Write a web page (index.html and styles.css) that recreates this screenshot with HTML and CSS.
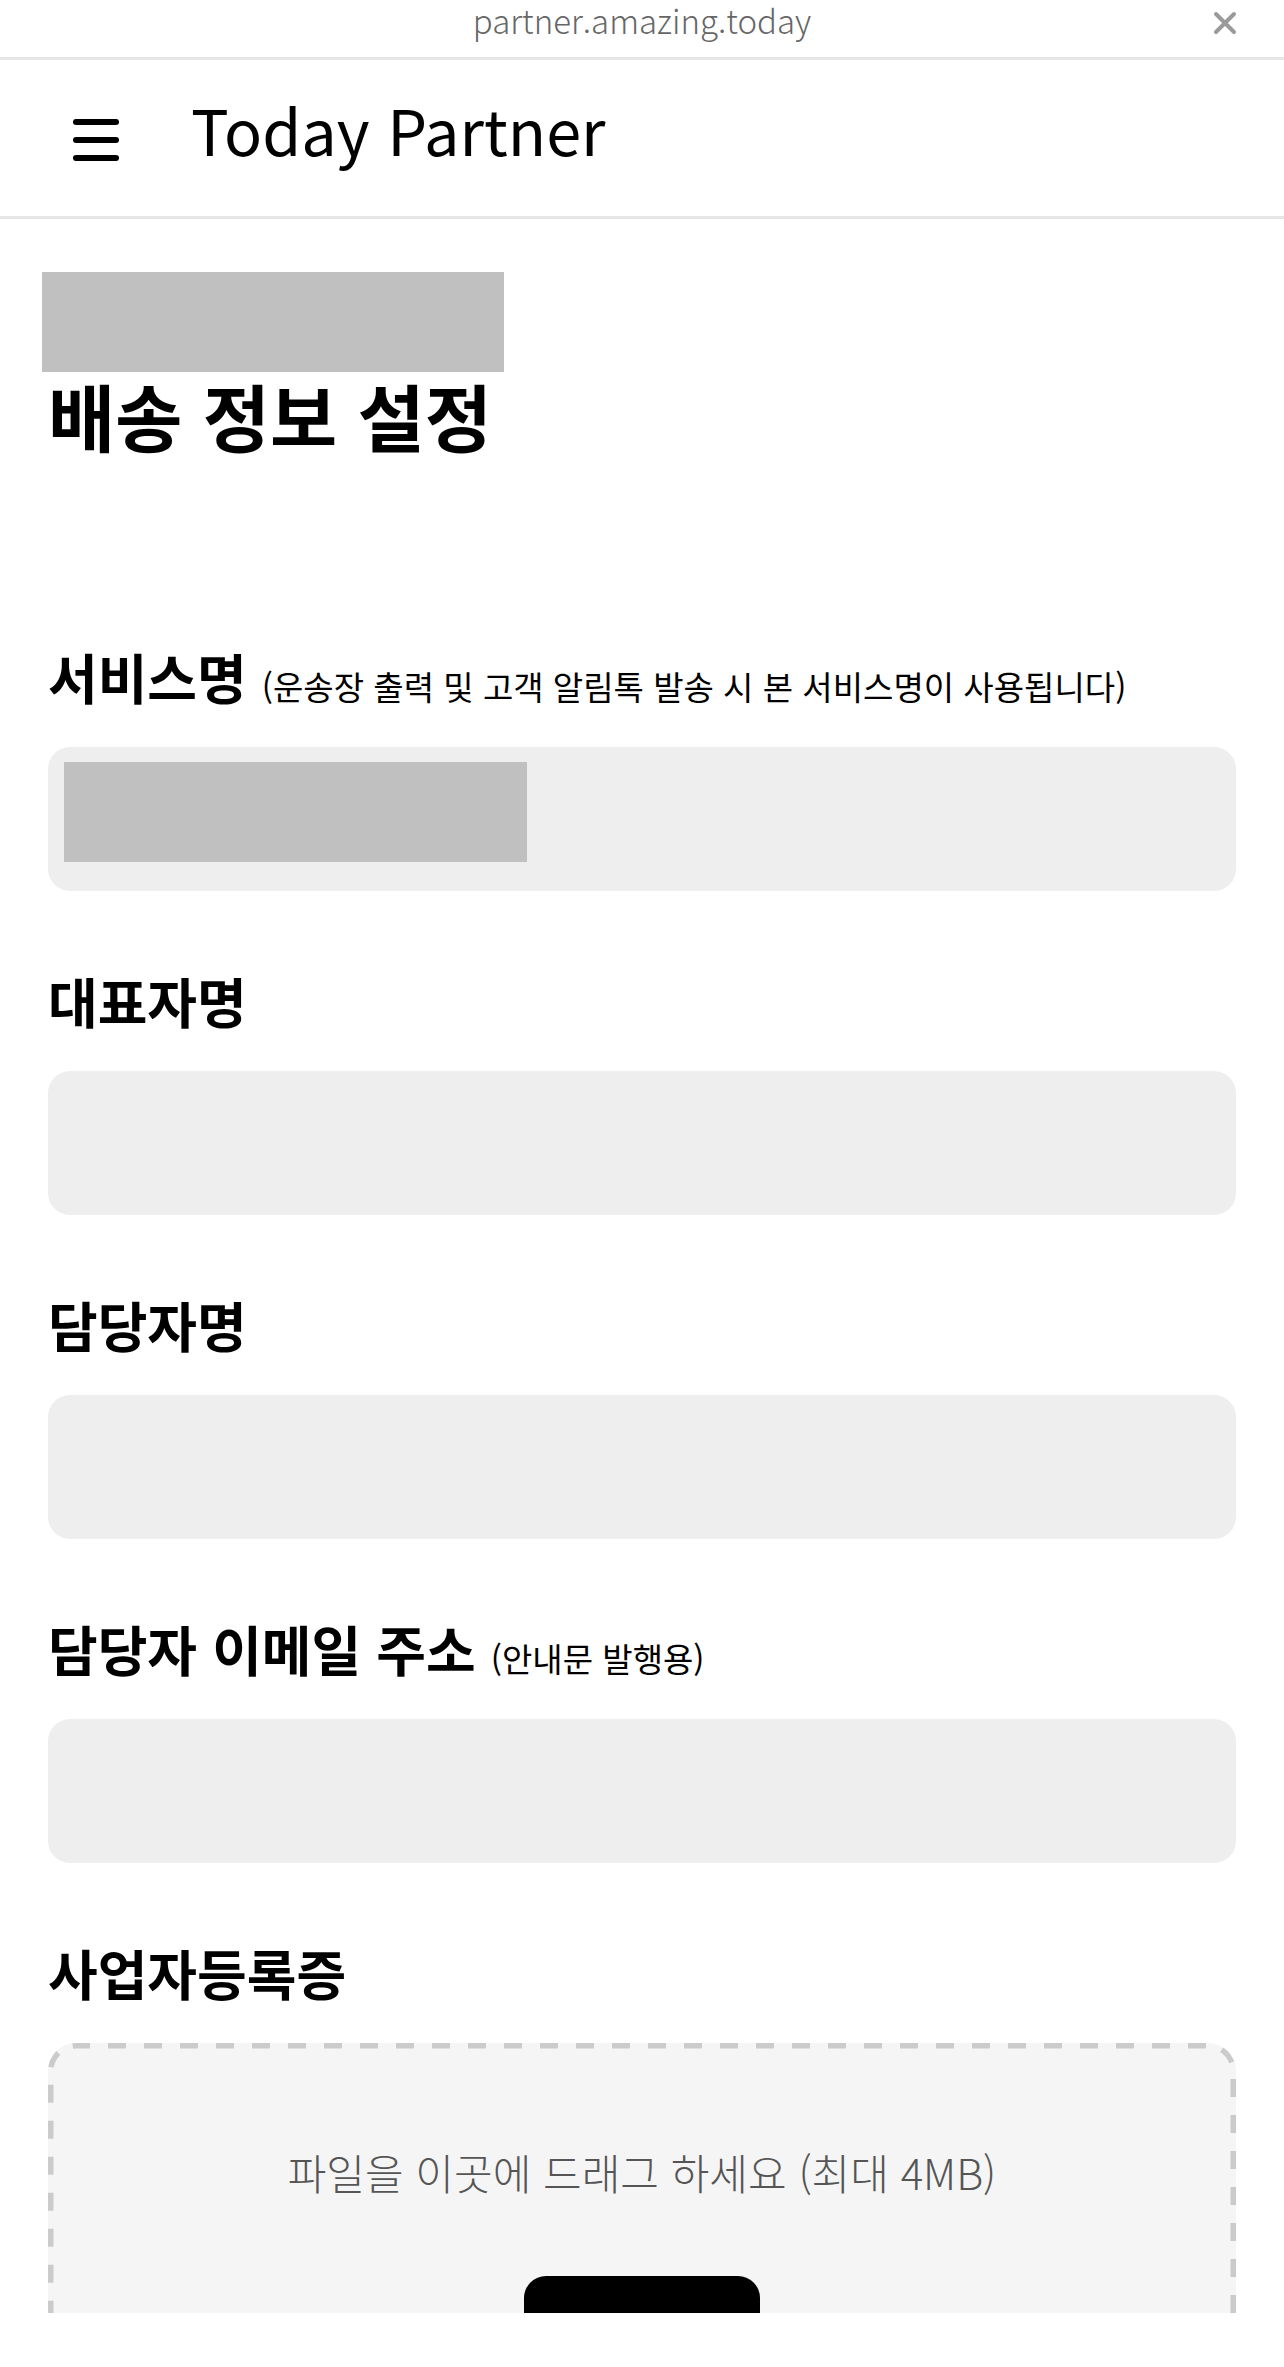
FILE: index.html
```html
<!DOCTYPE html>
<html lang="ko">
<head>
	<meta charset="UTF-8">
	<title>배송 정보 설정 - Today Partner</title>
	<link rel="stylesheet" href="styles.css">
</head>
<body>
	<div class="topbar">
		<span></span>
		<span class="url">partner.amazing.today</span>
		<a href="javascript:;" class="close">
			<svg width="24" height="24" viewBox="0 0 24 24"><path d="M3 3L21 21M21 3L3 21" stroke="#9a9a9a" stroke-width="4" stroke-linecap="round"/></svg>
		</a>
	</div>
	<div class="header">
		<a href="javascript:;" class="menu">
			<i></i><i></i><i></i>
		</a>
		<span class="logo">Today Partner</span>
	</div>
	<div class="viewport">
		<div class="main">
			<div class="mask crumb"></div>
			<h1 class="title">배송 정보 설정</h1>

			<div class="field first">
				<div class="label">서비스명 <small>(운송장 출력 및 고객 알림톡 발송 시 본 서비스명이 사용됩니다)</small></div>
				<div class="input">
					<div class="mask value"></div>
				</div>
			</div>
			<div class="field">
				<div class="label">대표자명</div>
				<div class="input"></div>
			</div>
			<div class="field">
				<div class="label">담당자명</div>
				<div class="input"></div>
			</div>
			<div class="field">
				<div class="label">담당자 이메일 주소 <small>(안내문 발행용)</small></div>
				<div class="input"></div>
			</div>
			<div class="field">
				<div class="label">사업자등록증</div>
				<div class="drop">
					<p class="drop-tip">파일을 이곳에 드래그 하세요 (최대 4MB)</p>
					<a href="javascript:;" class="btn">파일 선택</a>
				</div>
			</div>
		</div>
	</div>
</body>
</html>
```
FILE: styles.css
```css
* {
	padding: 0;
	margin: 0;
	box-sizing: border-box;
}
a {
	text-decoration: none;
}
body {
	font-family: "Noto Sans CJK KR", "Noto Sans", sans-serif;
	color: #000;
	background: #fff;
}
.topbar {
	height: 60px;
	border-bottom: 3px solid #e6e6e6;
	display: grid;
	grid-template-columns: 1fr auto 1fr;
	align-items: start;
}
.url {
	font-size: 33px;
	font-weight: 300;
	color: #666;
	line-height: 40px;
}
.close {
	justify-self: end;
	margin: 11px 47px 0 0;
	display: flex;
}
.header {
	height: 159px;
	border-bottom: 3px solid #e6e6e6;
	display: flex;
	align-items: center;
	padding-left: 73px;
	gap: 72px;
}
.menu {
	display: flex;
	flex-direction: column;
	gap: 12px;
	margin-top: 3px;
}
.menu i {
	display: block;
	width: 46px;
	height: 6px;
	border-radius: 3px;
	background: #000;
}
.logo {
	font-size: 63px;
	line-height: 72px;
	color: #000;
	margin-bottom: 18px;
}
.viewport {
	height: 2094px;
	overflow: hidden;
}
.main {
	padding: 0 48px;
}
.mask {
	background: #c0c0c0;
}
.crumb {
	width: 462px;
	height: 100px;
	margin: 53px 0 0 -6px;
}
.title {
	font-size: 73px;
	line-height: 84px;
	font-weight: 700;
}
.field {
	margin-top: 80px;
}
.field.first {
	margin-top: 191px;
}
.label {
	font-size: 54px;
	line-height: 60px;
	height: 60px;
	font-weight: 700;
	white-space: nowrap;
}
.label small {
	font-size: 33px;
	line-height: 1;
	font-weight: 400;
}
.input {
	margin-top: 40px;
	height: 144px;
	border-radius: 22px;
	background: #eee;
	padding: 15px 16px;
}
.value {
	width: 463px;
	height: 100px;
}
/* dashed frame drawn with svg so the dashes are long like the design */
.drop {
	margin-top: 40px;
	height: 420px;
	border-radius: 28px;
	background: #f5f5f5 url("data:image/svg+xml,%3Csvg xmlns='http://www.w3.org/2000/svg' width='100%25' height='100%25'%3E%3Crect width='100%25' height='100%25' rx='28' ry='28' fill='none' stroke='%23cbcbcb' stroke-width='11' stroke-dasharray='18 18' stroke-dashoffset='4'/%3E%3C/svg%3E") no-repeat;
	padding-top: 104px;
	display: flex;
	flex-direction: column;
	align-items: center;
}
.drop-tip {
	font-size: 42px;
	line-height: 50px;
	font-weight: 300;
	color: #555;
}
.btn {
	margin-top: 79px;
	width: 236px;
	height: 104px;
	border-radius: 22px;
	background: #000;
	color: #fff;
	font-size: 32px;
	line-height: 104px;
	text-align: center;
}
```
